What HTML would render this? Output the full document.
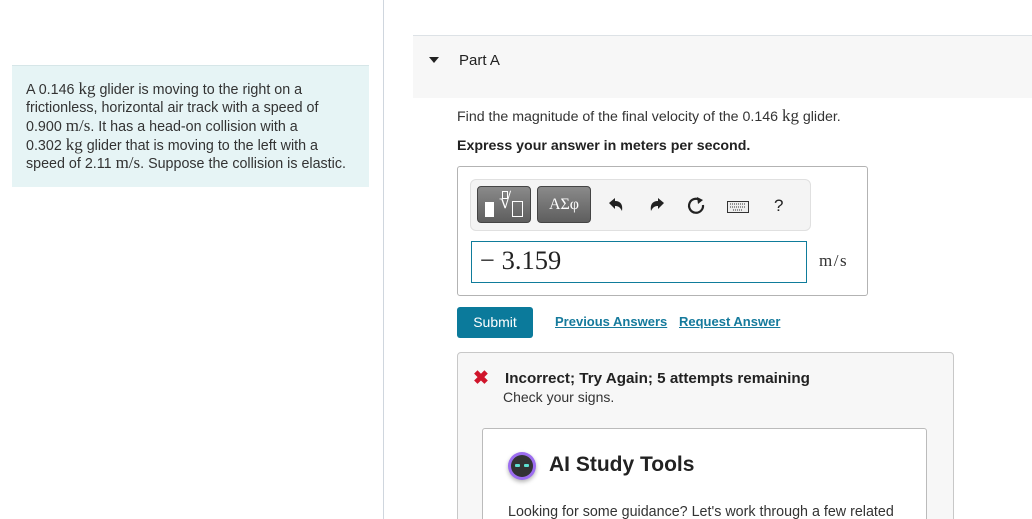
<!DOCTYPE html>
<html><head><meta charset="utf-8"><style>
*{margin:0;padding:0;box-sizing:border-box}
html,body{width:1032px;height:519px;overflow:hidden}
body{background:#fff;font-family:"Liberation Sans",Arial,sans-serif;color:#333;position:relative}
.a{position:absolute;white-space:nowrap}
.m{font-family:"Liberation Serif",serif;font-size:17px;line-height:1}
.l div{height:18.6px;line-height:18.6px}
</style></head><body>
<div class="a" style="left:383px;top:0;width:1px;height:519px;background:#cfd6de"></div>
<div class="a" style="left:12px;top:65px;width:357px;height:122px;background:#e6f4f5;border-top:1px solid #d6e6e8"></div>
<div class="a l" style="left:26px;top:80px;font-size:14.3px;color:#333;width:340px">
<div>A 0.146 <span class="m">kg</span> glider is moving to the right on a</div><div>frictionless, horizontal air track with a speed of</div><div>0.900 <span class="m">m/s</span>. It has a head-on collision with a</div><div>0.302 <span class="m">kg</span> glider that is moving to the left with a</div><div>speed of 2.11 <span class="m">m/s</span>. Suppose the collision is elastic.</div>
</div>
<div class="a" style="left:413px;top:35px;width:619px;height:63px;background:#f7f7f7;border-top:1px solid #dde2e6"></div>
<div class="a" style="left:429px;top:57px;width:0;height:0;border-left:5px solid transparent;border-right:5px solid transparent;border-top:6px solid #222"></div>
<div class="a" style="left:459px;top:52px;font-size:15px;color:#222">Part A</div>
<div class="a" style="left:457px;top:107px;font-size:14.2px">Find the magnitude of the final velocity of the 0.146 <span class="m">kg</span> glider.</div>
<div class="a" style="left:457px;top:138px;font-size:14.2px;font-weight:bold;color:#222">Express your answer in meters per second.</div>
<div class="a" style="left:457px;top:166px;width:411px;height:130px;border:1px solid #b3b3b3;border-radius:3px"></div>
<div class="a" style="left:470px;top:179px;width:341px;height:52px;background:#f4f4f4;border:1px solid #e0e0e0;border-radius:6px"></div>
<div class="a" style="left:477px;top:186px;width:54px;height:37px;background:linear-gradient(#8a8a8a,#5e5e5e);border:1px solid #444;border-radius:4px"></div>
<div class="a" style="left:485px;top:202px;width:9px;height:15px;background:#fff"></div>
<div class="a" style="left:499px;top:188px;font-family:'Liberation Serif',serif;color:#fff;font-size:22px">√</div>
<div class="a" style="left:502px;top:191px;width:6px;height:8px;border:1px solid #fff"></div>
<div class="a" style="left:512px;top:201px;width:11px;height:16px;border:1px solid #fff"></div>
<div class="a" style="left:537px;top:186px;width:54px;height:37px;background:linear-gradient(#8a8a8a,#5e5e5e);border:1px solid #444;border-radius:4px;color:#fff;font-family:'Liberation Serif',serif;font-size:16px;text-align:center;line-height:35px">ΑΣφ</div>
<svg class="a" style="left:607px;top:196px" width="18" height="18" viewBox="0 0 18 18"><path d="M2 7 L8 2 V5 C14 5 16 9 15 15 C13 11 11 10 8 10 V13 Z" fill="#222"/></svg>
<svg class="a" style="left:648px;top:196px" width="18" height="18" viewBox="0 0 18 18"><path d="M16 7 L10 2 V5 C4 5 2 9 3 15 C5 11 7 10 10 10 V13 Z" fill="#222"/></svg>
<svg class="a" style="left:687px;top:196px" width="20" height="20" viewBox="0 0 20 20"><path d="M13 4 A7 7 0 1 0 16 9" fill="none" stroke="#222" stroke-width="2.2"/><path d="M10 1 L16 4 L11 8 Z" fill="#222"/></svg>
<svg class="a" style="left:727px;top:201px" width="22" height="12" viewBox="0 0 22 12"><rect x="0.5" y="0.5" width="21" height="11" fill="#eee" stroke="#333"/><path d="M3 3h16M3 6h16M6 9h10" stroke="#333" stroke-dasharray="1 1"/></svg>
<div class="a" style="left:774px;top:196px;font-size:17px;color:#222">?</div>
<div class="a" style="left:471px;top:241px;width:336px;height:42px;border:1px solid #0f7c9b"></div>
<div class="a" style="left:480px;top:245px;font-family:'Liberation Serif',serif;font-size:26.5px;color:#222">− 3.159</div>
<div class="a" style="left:819px;top:251px;font-family:'Liberation Serif',serif;font-size:17px;letter-spacing:1.5px;color:#333">m/s</div>
<div class="a" style="left:457px;top:307px;width:76px;height:31px;background:#0b7a9b;border-radius:3px;color:#fff;font-size:14px;text-align:center;line-height:31px">Submit</div>
<div class="a" style="left:555px;top:314px;font-size:13px;color:#157a9c;text-decoration:underline;font-weight:bold">Previous Answers</div>
<div class="a" style="left:679px;top:314px;font-size:13px;color:#157a9c;text-decoration:underline;font-weight:bold">Request Answer</div>
<div class="a" style="left:457px;top:352px;width:497px;height:180px;background:#f7f7f7;border:1px solid #c8c8c8;border-radius:4px"></div>
<div class="a" style="left:473px;top:367px;color:#d0152b;font-size:19px;font-weight:bold">✖</div>
<div class="a" style="left:505px;top:370px;font-size:15.2px;font-weight:bold;color:#222">Incorrect; Try Again; 5 attempts remaining</div>
<div class="a" style="left:503px;top:389px;font-size:14px;color:#333">Check your signs.</div>
<div class="a" style="left:482px;top:428px;width:445px;height:100px;background:#fff;border:1px solid #bbb;border-radius:3px"></div>
<div class="a" style="left:508px;top:452px;width:28px;height:28px;border-radius:50%;background:#9c6df0;box-shadow:0 2px 4px rgba(0,0,0,.3)"></div>
<div class="a" style="left:511px;top:455px;width:22px;height:22px;border-radius:50%;background:#333"></div>
<div class="a" style="left:515px;top:464px;width:5px;height:3px;background:#5ee0d0;border-radius:1px"></div>
<div class="a" style="left:524px;top:464px;width:5px;height:3px;background:#5ee0d0;border-radius:1px"></div>
<div class="a" style="left:549px;top:453px;font-size:21px;font-weight:bold;color:#222">AI Study Tools</div>
<div class="a" style="left:508px;top:504px;font-size:14.3px;color:#333">Looking for some guidance? Let's work through a few related</div>
</body></html>
